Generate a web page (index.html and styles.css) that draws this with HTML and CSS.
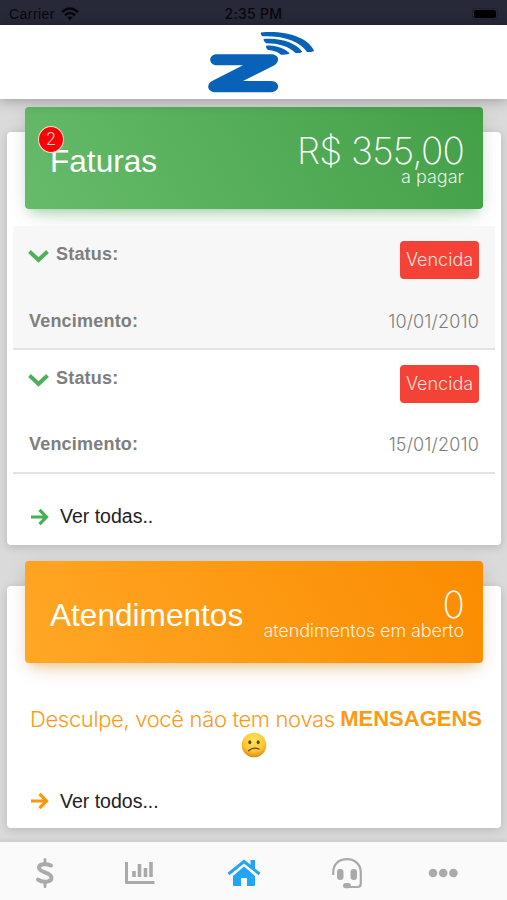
FILE: index.html
```html
<!DOCTYPE html>
<html lang="pt-BR">
<head>
<meta charset="utf-8">
<title>Início</title>
<link rel="stylesheet" href="styles.css">
</head>
<body>
<div class="statusbar">
  <div class="carrier"><span>Carrier</span>
    <svg width="18" height="14" viewBox="0 0 18 14" fill="none" stroke="#07070b" stroke-width="2.5"><path d="M1 5Q9-2 17 5M4 8.2Q9 3.8 14 8.2"/><path d="M9 13.3L6.2 10.4Q9 8.4 11.8 10.4Z" fill="#07070b" stroke="none"/></svg>
  </div>
  <time class="clock">2:35 PM</time>
  <div class="battery"><i></i></div>
</div>
<header class="header">
  <svg class="logo" width="108" height="62" viewBox="207 31 108 62" fill="#0863b8">
    <path d="M217 54.300H271C279 54.300 280.500 61.500 274 65.500L243 81H271C280.500 81 280.500 92.200 271 92.200H216C207 92.200 206 84.500 212 81L243 65.300H217C208 65.300 208 54.300 217 54.300Z"/>
    <path d="M261 32.400C285 30 308 37 314 50.500Q313.800 52.300 307 51.900C300 42 285 35.600 262.500 36.300Q260 34.500 261 32.400Z"/>
    <path d="M263.500 39C281 37.500 296 43 302 51.500Q302.300 53.300 295.500 52.900C289 46.500 279 43.200 266 43.200Q263.200 41.500 263.500 39Z"/>
    <path d="M266 45.700C276 44.500 285 49 289.500 53Q290 54.900 281 54.700C277.500 51.900 274 50.500 268 50Q265.500 48 266 45.700Z"/>
  </svg>
</header>
<main class="content">
  <section class="card invoices">
    <div class="banner green">
      <h2 class="title"><span>Faturas</span><span class="badge">2</span></h2>
      <div class="summary"><span class="amount">R$ 355,00</span><span class="caption">a pagar</span></div>
    </div>
    <ul class="list">
      <li class="row shaded">
        <div class="line top"><svg class="chevron" width="22" height="14" viewBox="0 0 22 14"><path d="M1.500 2.500L10.500 11L19.500 2.500"/></svg><b class="status">Status:</b><span class="tag">Vencida</span></div>
        <div class="line"><b class="due">Vencimento:</b><span class="date">10/01/2010</span></div>
      </li>
      <li class="row">
        <div class="line top"><svg class="chevron" width="22" height="14" viewBox="0 0 22 14"><path d="M1.500 2.500L10.500 11L19.500 2.500"/></svg><b class="status">Status:</b><span class="tag">Vencida</span></div>
        <div class="line"><b class="due">Vencimento:</b><span class="date">15/01/2010</span></div>
      </li>
    </ul>
    <a class="more m-green"><svg width="19" height="18" viewBox="0 0 19 18"><path d="M1 9H16M9.500 1.800L16.500 9L9.500 16.200"/></svg><span>Ver todas..</span></a>
  </section>
  <section class="card tickets">
    <div class="banner orange">
      <h2 class="title"><span>Atendimentos</span></h2>
      <div class="summary"><span class="amount">0</span><span class="caption c-open">atendimentos em aberto</span></div>
    </div>
    <p class="message"><span class="msg">Desculpe, você não tem novas</span><b>MENSAGENS</b></p>
    <div class="face">
      <svg width="26" height="26" viewBox="0 0 26 26"><defs><radialGradient id="f" cx=".5" cy=".3" r=".7"><stop offset="0" stop-color="#ffe65a"/><stop offset=".65" stop-color="#fcc52f"/><stop offset="1" stop-color="#dc8c12"/></radialGradient></defs><circle cx="13" cy="13" r="12.300" fill="url(#f)"/><g fill="#66421a"><ellipse cx="8.800" cy="10.200" rx="1.500" ry="2"/><ellipse cx="17.200" cy="10.200" rx="1.500" ry="2"/></g><path d="M7.500 18.700Q12.500 14.700 18 17" fill="none" stroke="#66421a" stroke-width="1.300" stroke-linecap="round"/></svg>
    </div>
    <a class="more m-orange"><svg width="19" height="18" viewBox="0 0 19 18"><path d="M1 9H16M9.500 1.800L16.500 9L9.500 16.200"/></svg><span>Ver todos...</span></a>
  </section>
</main>
<nav class="tabs">
  <svg width="20" height="32" viewBox="0 0 20 32" fill="none" stroke="#aaa" stroke-linecap="round"><path d="M16 8.500C12.500 7 4 6.200 4 10.700C4 15.800 16.500 14.800 16.500 20.500C16.500 26 7 25.500 3 22.600" stroke-width="4"/><path d="M10 2.500V6M10 26V29.500" stroke-width="3"/></svg>
  <svg width="30" height="24" viewBox="0 0 30 24" fill="none" stroke="#aaa" stroke-width="3"><path d="M1.500 1V21.500H29.500" stroke-linejoin="round"/><path d="M9 10V16M14.500 3V16M20.500 7V16M26 1V16" stroke-width="3.600"/></svg>
  <svg width="34" height="28" viewBox="0 0 34 28" fill="#22a5f7"><path d="M17 7.500L28 17V26Q28 27 27 27H20V19H14V27H7Q6 27 6 26V17Z"/><path d="M1.500 15L17 2.500L32.500 15" fill="none" stroke="#22a5f7" stroke-width="3"/><path d="M23.500 1H28V11.500L23.500 8Z"/></svg>
  <svg width="30" height="31" viewBox="0 0 30 31" fill="none" stroke="#aaa" stroke-width="2.200"><path d="M1.200 17V14.500C1.200 6 7 1.200 15 1.200S28.800 6.500 28.800 14.500V25.500Q28.800 29 25.500 29H15"/><g fill="#aaa" stroke="none"><rect x="5" y="11" width="6.500" height="11" rx="3"/><rect x="18.500" y="11" width="6.500" height="11" rx="3"/><rect x="11" y="25" width="8" height="5.200" rx="2.600"/></g></svg>
  <svg width="30" height="10" viewBox="0 0 30 10" fill="#aaa"><circle cx="5" cy="5" r="4.300"/><circle cx="15.200" cy="5" r="4.300"/><circle cx="25.400" cy="5" r="4.300"/></svg>
</nav>
</body>
</html>
```
FILE: styles.css
```css
* { box-sizing: border-box; }
body { margin: 0; width: 507px; height: 900px; overflow: hidden; display: flex; flex-direction: column; background: #dadada; font-family: "Liberation Sans", sans-serif; }
h2, p, ul { margin: 0; padding: 0; font-weight: 400; list-style: none; }
svg { display: block; flex: none; }

.statusbar { height: 25px; flex: none; background: #272838; color: #07070b; display: grid; grid-template-columns: 1fr auto 1fr; align-items: center; padding: 2px 9px 0; font-size: 14px; }
.carrier { display: flex; align-items: center; gap: 6px; letter-spacing: .45px; }
.clock { font: 500 14px Inter, sans-serif; letter-spacing: .3px; }
.battery { justify-self: end; width: 26px; height: 12px; border-radius: 3px; border: 1px solid #20212e; padding: 1px; }
.battery i { display: block; height: 8px; border-radius: 2px; background: #000; }

.header { height: 74px; flex: none; background: #fff; display: flex; justify-content: center; padding: 6px 0 0 15px; box-shadow: 0 2px 12px rgba(0, 0, 0, .28); position: relative; }

.content { flex: 1; padding: 33px 6px 0 7px; }
.card { background: #fff; border-radius: 4px; padding: 0 6px; box-shadow: 0 2px 10px rgba(0, 0, 0, .16); display: flex; flex-direction: column; }
.invoices { height: 413px; }
.tickets { height: 242px; margin-top: 41px; }
.banner { height: 102px; flex: none; margin: -25px 12px 0; border-radius: 4px; padding: 0 19px 0 25px; display: flex; justify-content: space-between; color: #fff; }
.green { background: linear-gradient(60deg, #66bb6a, #43a047); box-shadow: 0 12px 20px -10px rgba(76, 175, 80, .3), 0 4px 20px rgba(0, 0, 0, .09), 0 7px 8px -5px rgba(76, 175, 80, .25); }
.orange { background: linear-gradient(60deg, #ffa726, #fb8c00); box-shadow: 0 12px 20px -10px rgba(255, 152, 0, .3), 0 4px 20px rgba(0, 0, 0, .09), 0 7px 8px -5px rgba(255, 152, 0, .25); }
.title { position: relative; font-size: 31.6px; line-height: 34px; padding-top: 37px; }
.badge { position: absolute; left: -12px; top: 19px; width: 26px; height: 27px; border-radius: 50%; background: #fc0007; border: 1.5px solid #f8dfcc; font: 300 17px/24px Inter, sans-serif; text-align: center; color: #ffd0c8; }
.summary { display: flex; flex-direction: column; align-items: flex-end; padding-top: 26px; font-family: Inter, sans-serif; }
.amount { font-size: 37px; font-weight: 250; line-height: 36px; letter-spacing: -.8px; }
.caption { font-size: 18px; font-weight: 300; line-height: 18px; margin-top: -1px; color: rgba(255, 255, 255, .88); }
.c-open { letter-spacing: -.12px; }

.list { margin-top: 17px; }
.row { height: 123.5px; border-bottom: 2px solid #e3e3e3; padding: 15px 16px 0 15px; color: #7e7e7e; }
.row + .row { height: 124px; }
.shaded { background: #f7f7f7; }
.line { display: flex; align-items: center; justify-content: space-between; height: 24px; font-size: 18px; }
.top { height: 38px; margin-bottom: 30px; align-items: flex-start; }
.chevron { margin-top: 8px; }
.chevron path { fill: none; stroke: #4fb05a; stroke-width: 4; }
.status { flex: 1; padding-left: 6px; line-height: 27px; letter-spacing: .2px; }
.due { padding-left: 1px; letter-spacing: .2px; }
.tag { width: 79px; height: 38px; border-radius: 4px; background: #f44336; color: #ffe0dc; font: 300 18px/38px Inter, sans-serif; text-align: center; }
.date { font: 300 18px Inter, sans-serif; letter-spacing: .15px; }
.more { display: flex; align-items: center; gap: 11px; padding-left: 17px; height: 28px; font-size: 19.5px; color: #222; margin-top: 29px; }
.more path { fill: none; stroke-width: 3.200; }
.m-green path { stroke: #43b052; }
.m-orange path { stroke: #fb9609; }

.message { margin: 43px 13px 0 17px; height: 26px; display: flex; justify-content: space-between; align-items: center; white-space: nowrap; color: #fb9a17; font-size: 22px; }
.msg { font-family: Inter, sans-serif; font-weight: 300; letter-spacing: -.35px; }
.face { display: flex; justify-content: center; }
.tickets .more { margin-top: 29px; }

.tabs { height: 59px; flex: none; background: #fafafa; border-top: 1px solid #cfcfcf; position: relative; display: grid; grid-template-columns: 90px 99px 109px 97px 95px; place-items: center; padding: 4px 17px 0 0; justify-content: start; box-shadow: 0 -1px 4px rgba(0, 0, 0, .08); }
```
